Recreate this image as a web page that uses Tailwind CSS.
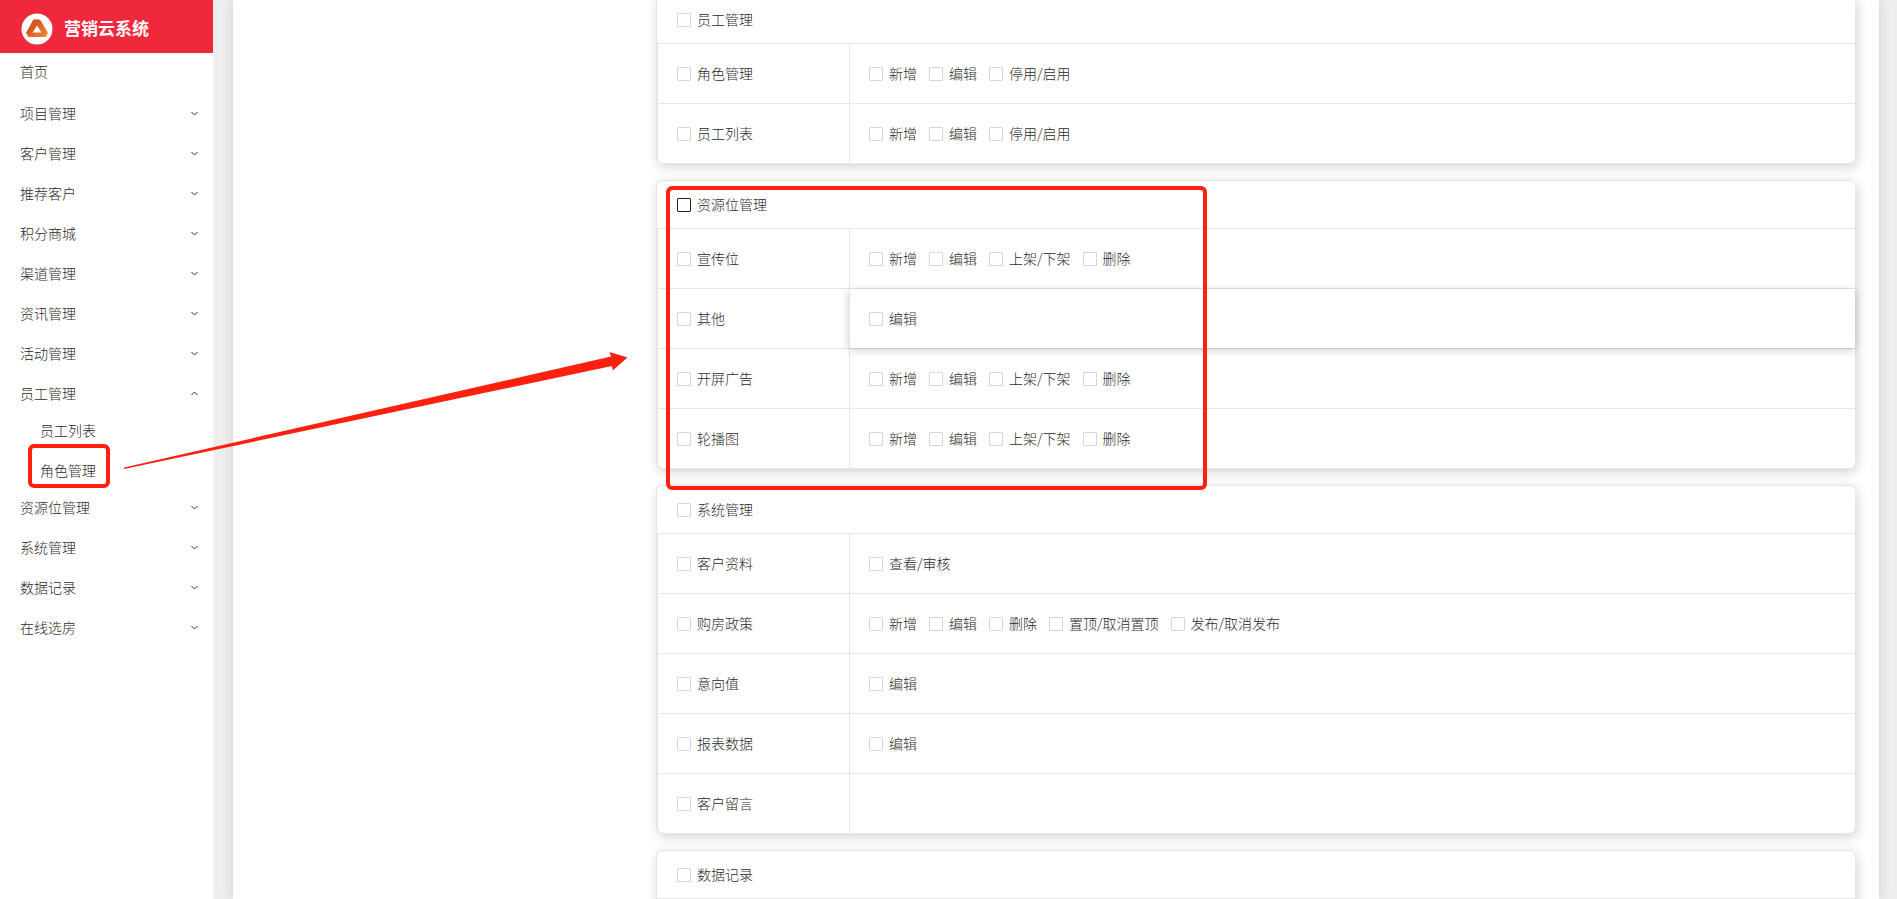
<!DOCTYPE html>
<html lang="zh-CN">
<head>
<meta charset="utf-8">
<title>营销云系统</title>
<script src="https://cdn.jsdelivr.net/npm/@tailwindcss/browser@4"></script>
</head>
<body class="relative flex h-screen overflow-hidden bg-[#eee] font-['Noto_Sans_CJK_SC',sans-serif] text-sm leading-5 font-light text-[#2a2a2a]">
<aside class="w-[213px] shrink-0 bg-white">
  <header class="flex h-[53px] items-center gap-[11px] bg-[#f0283c] pt-1 pl-[21px]">
    <svg class="size-8" viewBox="0 0 32 32" aria-hidden="true"><defs><linearGradient id="logo" x1="0" y1="0" x2="1" y2="1"><stop offset="0" stop-color="#c8401c"/><stop offset="1" stop-color="#ee8a35"/></linearGradient></defs><circle cx="16" cy="16" r="15.500" fill="#fff"/><path fill="url(#logo)" fill-rule="evenodd" d="M12.500 6.500h6.500L27 20l-2.500 4H7.500L5 20zM16 12.500l-4.400 7h8.800z"/><path fill="#d9531e" d="M12.500 6.500 16 12.500l-4.400 7L5 20z" opacity=".5"/></svg>
    <h1 class="pb-0.5 text-[17px] leading-6 font-bold text-white">营销云系统</h1>
  </header>
  <nav><ul id="menu" class="flex flex-col"></ul></nav>
</aside>
<main class="mr-[18px] ml-5 h-full min-w-0 grow bg-white pr-6 shadow-[0_0_12px_rgba(0,0,0,0.13)]">
  <div id="cards" class="-mt-[5px] ml-[423px] flex flex-col gap-4"></div>
</main>
<div class="pointer-events-none absolute top-[444px] left-7 h-11 w-[82px] rounded-md border-4 border-[#ff2010]"></div>
<div class="pointer-events-none absolute top-[186px] left-[666px] h-[304px] w-[541px] rounded-md border-4 border-[#ff2010]"></div>
<svg class="pointer-events-none absolute top-[340px] left-[120px]" width="520" height="140" viewBox="120 340 520 140" aria-hidden="true"><path fill="#ff2010" d="M124 467.500 L611 356.500 L609.500 352 L627.500 357.500 L612.700 370.500 L612 366 L124 469z"/></svg>
<script>
const menu = [['首页'], ['项目管理', 1], ['客户管理', 1], ['推荐客户', 1], ['积分商城', 1], ['渠道管理', 1], ['资讯管理', 1], ['活动管理', 1], ['员工管理', 1, ['员工列表', '角色管理']], ['资源位管理', 1], ['系统管理', 1], ['数据记录', 1], ['在线选房', 1]];
document.getElementById('menu').innerHTML = menu.map(([name, arrow, sub]) => {
  if (!arrow) return `<li class="mb-1.5"><a href="#" class="flex h-[38px] items-center pb-0.5 pl-5">${name}</a></li>`;
  const d = sub ? 'M.5 5 3.500 2l3 3' : 'M.5 2l3 3 3-3';
  return `<li class="${sub ? '' : 'mb-1.5'}"><button type="button" class="flex h-[34px] w-full items-center justify-between pr-[15px] pb-0.5 pl-5"><span>${name}</span><svg class="size-[7px]" viewBox="0 0 7 7" fill="none" stroke="#333" aria-hidden="true"><path d="${d}"/></svg></button>${sub ? `<ul>${sub.map(s => `<li><a href="#" class="flex h-10 items-center pb-0.5 pl-10">${s}</a></li>`).join('')}</ul>` : ''}</li>`;
}).join('');

const std = ['新增', '编辑', '停用/启用'];
const shelf = ['新增', '编辑', '上架/下架', '删除'];
const cards = [
  ['员工管理', [['角色管理', std], ['员工列表', std]]],
  ['资源位管理', [['宣传位', shelf], ['其他', ['编辑']], ['开屏广告', shelf], ['轮播图', shelf]]],
  ['系统管理', [['客户资料', ['查看/审核']], ['购房政策', ['新增', '编辑', '删除', '置顶/取消置顶', '发布/取消发布']], ['意向值', ['编辑']], ['报表数据', ['编辑']], ['客户留言', []]]],
  ['数据记录', [['', []]]],
];
const check = (name, dark) => `<label class="flex items-center gap-1.5"><input type="checkbox" class="size-3.5 appearance-none rounded-[1px] border ${dark ? 'border-[#222]' : 'border-[#d6d6d6]'} bg-white"><span class="pb-0.5">${name}</span></label>`;
document.getElementById('cards').innerHTML = cards.map(([title, rows]) => `
  <section class="rounded-md border-t border-l border-[#e4e4e4] bg-white shadow-[2px_3px_12px_rgba(0,0,0,0.18)]">
    <header class="flex h-[47px] items-center pt-px pl-5">${check(title, title === '资源位管理')}</header>
    ${rows.map(([name, acts]) => `<div class="flex h-[60px] border-t border-l border-[#e6e6e6] last:h-[61px] last:rounded-b-md last:border-b">
      <div class="flex w-[191px] shrink-0 items-center pt-px pl-[19px]">${name ? check(name) : ''}</div>
      <div class="flex grow items-center gap-3 border-l border-[#e6e6e6] pt-px pl-[19px] ${name === '其他' ? 'relative bg-white shadow-[0_2px_8px_rgba(0,0,0,0.2)]' : ''}">${acts.map(a => check(a)).join('')}</div>
    </div>`).join('')}
  </section>`).join('');
</script>
</body>
</html>
